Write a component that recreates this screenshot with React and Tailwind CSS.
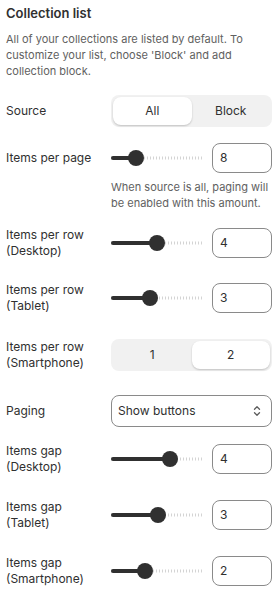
import React from "react";

const font = { fontFamily: "Inter, 'Noto Sans', sans-serif" };

function Label({ children }) {
    return (
        <div className="w-[105px] shrink-0 pr-[14px] text-[12px] leading-4 text-[#303030]">
            {children}
        </div>
    );
}

function Slider({ pos, value }) {
    return (
        <div className="flex items-center gap-[9px]">
            <div className="relative h-4 w-[92px]">
                <div className="absolute left-0 right-0 top-1/2 h-[3px] -translate-y-1/2 bg-[repeating-linear-gradient(90deg,#d4d4d4_0_1px,transparent_1px_3px)]" />
                <div
                    className="absolute left-0 top-1/2 h-1 -translate-y-1/2 rounded-full bg-[#303030]"
                    style={{ width: pos }}
                />
                <div
                    className="absolute top-1/2 h-4 w-4 -translate-x-1/2 -translate-y-1/2 rounded-full bg-[#303030]"
                    style={{ left: pos }}
                />
            </div>
            <div className="flex h-[30px] w-[60px] items-center rounded-lg border border-[#8a8a8a] px-[7px] text-[12px] text-[#303030]">
                {value}
            </div>
        </div>
    );
}

function Segmented({ options, active }) {
    return (
        <div className="flex h-8 w-full rounded-lg bg-[#f1f1f1] p-0.5">
            {options.map((o) => (
                <div
                    key={o}
                    className={
                        o === active
                            ? "flex flex-1 items-center justify-center rounded-lg bg-white text-[12px] text-[#303030] shadow-[0_1px_2px_rgba(0,0,0,0.2)]"
                            : "flex flex-1 items-center justify-center text-[12px] text-[#303030]"
                    }
                >
                    {o}
                </div>
            ))}
        </div>
    );
}

export default function App() {
    return (
        <div className="w-[278px] bg-white px-[6px] pb-4 text-[#303030]" style={font}>
            <h2 className="pt-[3px] text-[13px] font-semibold leading-5">Collection list</h2>
            <p className="mt-2 text-[11px] leading-4 text-[#616161]">
                All of your collections are listed by default. To customize your list, choose 'Block' and add collection block.
            </p>

            <div className="mt-4 flex items-center">
                <Label>Source</Label>
                <div className="flex-1">
                    <Segmented options={["All", "Block"]} active="All" />
                </div>
            </div>

            <div className="mt-[15px] flex h-8 items-center">
                <Label>Items per page</Label>
                <Slider pos={25} value="8" />
            </div>
            <p className="ml-[105px] mt-[5px] text-[11px] leading-4 text-[#616161]">
                When source is all, paging will be enabled with this amount.
            </p>

            <div className="mt-4 flex h-8 items-center">
                <Label>Items per row (Desktop)</Label>
                <Slider pos={46} value="4" />
            </div>

            <div className="mt-[23px] flex h-8 items-center">
                <Label>Items per row (Tablet)</Label>
                <Slider pos={39} value="3" />
            </div>

            <div className="mt-[25px] flex h-8 items-center">
                <Label>Items per row (Smartphone)</Label>
                <div className="flex-1">
                    <Segmented options={["1", "2"]} active="2" />
                </div>
            </div>

            <div className="mt-6 flex h-8 items-center">
                <Label>Paging</Label>
                <div className="flex h-8 flex-1 items-center justify-between rounded-lg border border-[#8a8a8a] pl-[6px] pr-2 text-[12px]">
                    <span>Show buttons</span>
                    <svg width="12" height="14" viewBox="0 0 12 14" fill="none" stroke="#5c5c5c" strokeWidth="1.3" strokeLinecap="round" strokeLinejoin="round">
                        <path d="M3.5 5.2 6 2.8l2.5 2.4" />
                        <path d="M3.5 8.8 6 11.2l2.5-2.4" />
                    </svg>
                </div>
            </div>

            <div className="mt-4 flex h-8 items-center">
                <Label>Items gap (Desktop)</Label>
                <Slider pos={59} value="4" />
            </div>

            <div className="mt-6 flex h-8 items-center">
                <Label>Items gap (Tablet)</Label>
                <Slider pos={47} value="3" />
            </div>

            <div className="mt-6 flex h-8 items-center">
                <Label>Items gap (Smartphone)</Label>
                <Slider pos={34} value="2" />
            </div>
        </div>
    );
}
